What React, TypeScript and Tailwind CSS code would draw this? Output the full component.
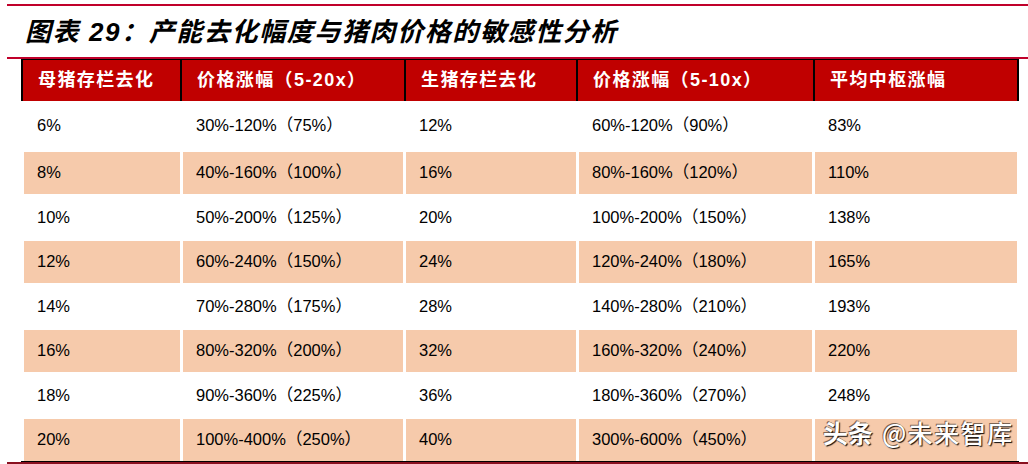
import React from 'react';

const RED_LINE = 'bg-[#c0002a]';

const HEADERS = ['母猪存栏去化', '价格涨幅（5-20x）', '生猪存栏去化', '价格涨幅（5-10x）', '平均中枢涨幅'];

const ROWS: string[][] = [
  ['6%', '30%-120%（75%）', '12%', '60%-120%（90%）', '83%'],
  ['8%', '40%-160%（100%）', '16%', '80%-160%（120%）', '110%'],
  ['10%', '50%-200%（125%）', '20%', '100%-200%（150%）', '138%'],
  ['12%', '60%-240%（150%）', '24%', '120%-240%（180%）', '165%'],
  ['14%', '70%-280%（175%）', '28%', '140%-280%（210%）', '193%'],
  ['16%', '80%-320%（200%）', '32%', '160%-320%（240%）', '220%'],
  ['18%', '90%-360%（225%）', '36%', '180%-360%（270%）', '248%'],
  ['20%', '100%-400%（250%）', '40%', '300%-600%（450%）', ''],
];

// header cell widths (black separators between them)
const HEAD_W = ['w-[157px]', 'w-[222px]', 'w-[170px]', 'w-[235px]', 'w-[202px]'];

const font = "font-['Liberation_Sans','Noto_Sans_CJK_SC',sans-serif]";

export default function App() {
  return (
    <div className={`relative w-[1028px] h-[464px] overflow-hidden bg-white ${font}`}>
      {/* top rule */}
      <div className="pt-[4px] pl-[7px]">
        <div className={`h-[2px] ${RED_LINE}`} />
      </div>

      {/* title */}
      <div className="h-[51px] flex items-center pl-[25px] pt-[1px]">
        <h1 className="text-[26px] leading-none font-bold italic tracking-[1.6px] text-black">
          图表 29：产能去化幅度与猪肉价格的敏感性分析
        </h1>
      </div>

      <div className="pl-[7px]">
        <div className={`h-[2px] ${RED_LINE}`} />
      </div>

      {/* table */}
      <div className="ml-[21px] w-[998px]">
        {/* header */}
        <div className="flex h-[42px] gap-[2px] bg-black px-[2px] pt-px">
          {HEADERS.map((h, i) => (
            <div
              key={i}
              className={`${HEAD_W[i]} flex items-center bg-[#c00000] pl-[15px] text-[18px] font-bold tracking-[1.4px] text-white`}
            >
              {h}
            </div>
          ))}
        </div>

        {/* body */}
        <div className="ml-[3px] grid grid-cols-[156px_220px_170px_233px_202px] grid-rows-[48px_repeat(7,41.5px)] gap-[3px]">
          {ROWS.map((row, r) =>
            row.map((cell, c) => (
              <div
                key={`${r}-${c}`}
                className={`flex items-center pl-[13px] text-[16.5px] text-black ${r % 2 === 1 ? 'bg-[#f6caab]' : 'bg-white'}`}
              >
                {cell}
              </div>
            ))
          )}
        </div>
        <div className="h-[1.5px] bg-black" />
      </div>

      <div className="pl-[7px]">
        <div className="h-[2px] bg-[#8a1020]" />
      </div>

      {/* watermark */}
      <div className="absolute left-[823px] top-[420px] flex items-center text-[25px] leading-none text-white [text-shadow:1px_1px_1px_rgba(0,0,0,0.95),-1px_-1px_0_rgba(0,0,0,0.5)] font-['Noto_Sans_CJK_SC',sans-serif]">
        <span className="font-bold">头条</span>
        <span className="ml-[9px] tracking-[1.5px] font-medium">@未来智库</span>
      </div>
    </div>
  );
}
